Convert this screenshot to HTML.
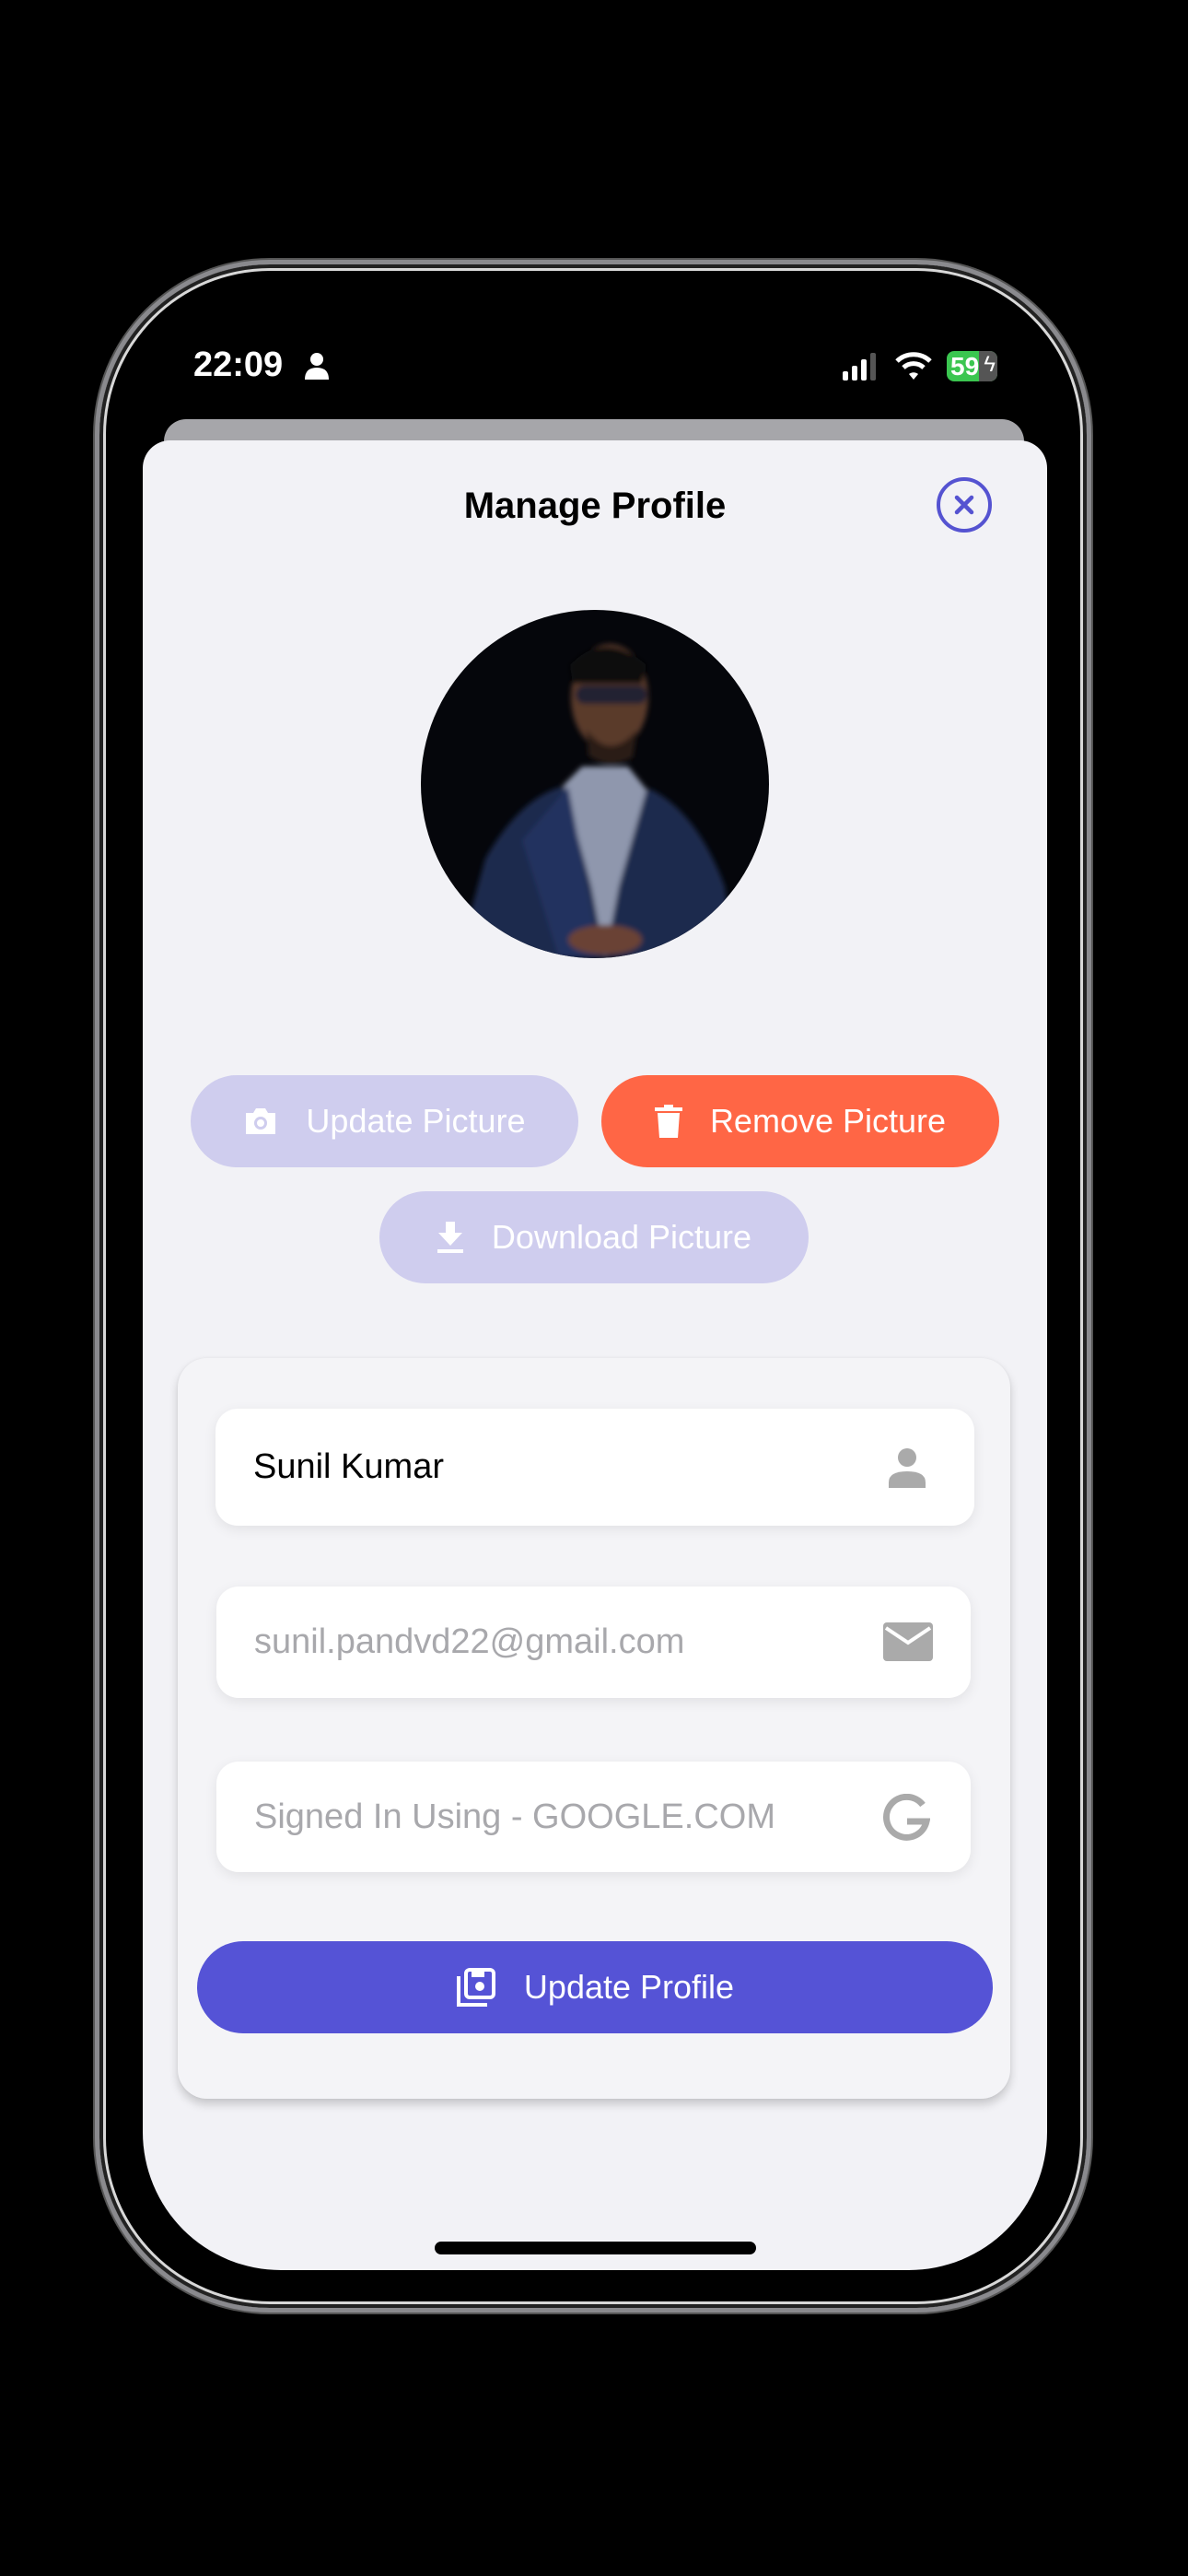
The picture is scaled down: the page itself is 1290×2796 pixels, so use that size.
<!DOCTYPE html>
<html><head><meta charset="utf-8"><style>
*{box-sizing:border-box;margin:0;padding:0}
body{width:1290px;height:2796px;background:#000;position:relative;overflow:hidden;font-family:"Liberation Sans",sans-serif}
.abs{position:absolute}
.frame{left:103px;top:282px;width:1082px;height:2228px;border-radius:190px;border:5px solid #8a8a8e;box-shadow:inset 0 0 0 4px #222,inset 0 0 0 7px #d8d8d8;background:#000}
.sheet{left:155px;top:478px;width:982px;height:1986px;background:#f2f2f6;border-radius:30px 30px 150px 150px}
.back{left:178px;top:455px;width:934px;height:60px;background:#a6a6aa;border-radius:24px}
.btn{position:absolute;height:100px;border-radius:50px;color:#fff;font-size:36px;display:flex;align-items:center;justify-content:center;gap:30px}
.field{position:absolute;background:#fff;border-radius:24px;box-shadow:0 4px 14px rgba(0,0,0,.08);font-size:38px;color:#a8a8ac;display:flex;align-items:center;padding-left:41px}
</style></head><body>
<div class="abs frame" style="box-shadow:inset 0 0 0 4px #222,inset 0 0 0 7px #d8d8d8,0 0 0 2px #555"></div>
<div class="abs" style="left:210px;top:375px;color:#fff;font-size:38px;font-weight:600">22:09</div>
<svg class="abs" style="left:330px;top:382px" width="28" height="30" viewBox="0 0 28 30"><circle cx="14" cy="8" r="7" fill="#fff"/><path d="M1 30 Q1 17 14 17 Q27 17 27 30Z" fill="#fff"/></svg>
<svg class="abs" style="left:915px;top:383px" width="40" height="30"><rect x="0" y="20" width="6" height="10" rx="2" fill="#fff"/><rect x="10" y="14" width="6" height="16" rx="2" fill="#fff"/><rect x="20" y="7" width="6" height="23" rx="2" fill="#fff"/><rect x="30" y="0" width="6" height="30" rx="2" fill="#555"/></svg>
<svg class="abs" style="left:972px;top:381px" width="40" height="32" viewBox="0 0 40 32"><path d="M2 11 A26 26 0 0 1 38 11" stroke="#fff" stroke-width="5" fill="none"/><path d="M9 18 A16 16 0 0 1 31 18" stroke="#fff" stroke-width="5" fill="none"/><path d="M15 25 L20 31 L25 25 A8 8 0 0 0 15 25Z" fill="#fff"/></svg>
<div class="abs" style="left:1028px;top:381px;width:55px;height:33px;border-radius:8px;background:#3bc650;overflow:hidden"><div style="position:absolute;right:0;top:0;width:20px;height:33px;background:#555"></div><span style="position:absolute;left:4px;top:1px;color:#fff;font-size:28px;font-weight:700">59</span><span style="position:absolute;right:2px;top:1px;color:#fff;font-size:24px">ϟ</span></div>
<div class="abs back"></div>
<div class="abs sheet"></div>
<div class="abs" style="left:155px;width:982px;top:527px;text-align:center;font-size:40px;font-weight:600;color:#000">Manage Profile</div>
<svg class="abs" style="left:1016px;top:517px" width="62" height="62"><circle cx="31" cy="31" r="28" fill="none" stroke="#5553d1" stroke-width="4"/><path d="M23 23L39 39M39 23L23 39" stroke="#5553d1" stroke-width="4.5" stroke-linecap="round"/></svg>
<svg class="abs" style="left:457px;top:662px" width="378" height="378" viewBox="0 0 378 378"><defs><clipPath id="c"><circle cx="189" cy="189" r="189"/></clipPath><filter id="b"><feGaussianBlur stdDeviation="3"/></filter></defs><g clip-path="url(#c)"><rect width="378" height="378" fill="#05060b"/><g filter="url(#b)"><path d="M40 378 L70 270 Q110 200 160 190 L250 195 Q300 220 330 300 L340 378Z" fill="#1d2a4e"/><path d="M155 190 L185 300 L200 378 L215 300 L245 195 L225 170 L175 170Z" fill="#8f97ad"/><path d="M160 192 L195 378 L150 378 L110 250Z" fill="#23335f"/><ellipse cx="205" cy="95" rx="42" ry="58" fill="#5a3a2c"/><path d="M162 60 Q200 20 245 60 L240 80 L165 80Z" fill="#111"/><rect x="168" y="82" width="78" height="20" rx="10" fill="#223"/><path d="M180 130 Q205 165 235 130 L230 160 Q205 175 182 158Z" fill="#2a1a14"/><ellipse cx="200" cy="358" rx="40" ry="16" fill="#6b4334"/></g></g></svg>
<div class="btn" style="left:207px;top:1167px;width:421px;background:#cfcdee"><svg width="38" height="32" viewBox="0 0 38 32"><path d="M3 7h8l3-5h10l3 5h8v23H3z" fill="#fff"/><circle cx="19" cy="18" r="7" fill="#cfcdee"/><circle cx="19" cy="18" r="4" fill="#fff"/></svg>Update Picture</div>
<div class="btn" style="left:653px;top:1167px;width:432px;background:#ff6645"><svg width="30" height="36" viewBox="0 0 30 36"><rect x="0" y="3" width="30" height="4" fill="#fff"/><rect x="10" y="0" width="10" height="4" fill="#fff"/><path d="M3 9h24l-2 27H5z" fill="#fff"/></svg>Remove Picture</div>
<div class="btn" style="left:412px;top:1293px;width:466px;background:#cfcdee"><svg width="30" height="34" viewBox="0 0 30 34"><path d="M10 0h10v12h8L15 26 2 12h8z" fill="#fff"/><rect x="1" y="30" width="28" height="4" fill="#fff"/></svg>Download Picture</div>
<div class="abs" style="left:193px;top:1474px;width:904px;height:804px;background:#f4f4f7;border-radius:32px;box-shadow:0 6px 10px rgba(0,0,0,.18),0 0 3px rgba(0,0,0,.05)"></div>
<div class="field" style="left:234px;top:1529px;width:824px;height:127px;color:#000">Sunil Kumar</div>
<svg class="abs" style="left:963px;top:1571px" width="44" height="44" viewBox="0 0 44 44"><circle cx="22" cy="11" r="10" fill="#aaa"/><path d="M2 44v-6q0-12 20-12t20 12v6z" fill="#aaa"/></svg>
<div class="field" style="left:235px;top:1722px;width:819px;height:121px">sunil.pandvd22@gmail.com</div>
<svg class="abs" style="left:959px;top:1761px" width="54" height="42" viewBox="0 0 54 42"><rect width="54" height="42" rx="4" fill="#aaa"/><path d="M3 6l24 16 24-16" stroke="#fff" stroke-width="4" fill="none"/></svg>
<div class="field" style="left:235px;top:1912px;width:819px;height:120px">Signed In Using - GOOGLE.COM</div>
<svg class="abs" style="left:958px;top:1947px" width="52" height="52" viewBox="0 0 52 52"><path d="M44 12A22 22 0 1 0 48 30H27" stroke="#aaa" stroke-width="7" fill="none"/></svg>
<div class="btn" style="left:214px;top:2107px;width:864px;background:#5553d6;font-size:36px"><svg width="44" height="44" viewBox="0 0 44 44"><path d="M3 10v31h31" stroke="#fff" stroke-width="4" fill="none"/><rect x="11" y="3" width="30" height="30" rx="4" stroke="#fff" stroke-width="4" fill="none"/><rect x="17" y="3" width="14" height="8" fill="#fff"/><circle cx="26" cy="21" r="5" fill="#fff"/></svg>Update Profile</div>
<div class="abs" style="left:472px;top:2433px;width:349px;height:14px;border-radius:7px;background:#000"></div>
</body></html>
